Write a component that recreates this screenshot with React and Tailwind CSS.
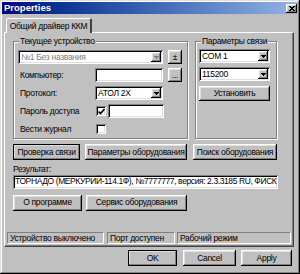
import React from "react";

// win98 style bevels
const raised =
  "bg-[#c0c0c0] shadow-[inset_-1px_-1px_#000,inset_1px_1px_#fff,inset_-2px_-2px_#808080,inset_2px_2px_#dfdfdf]";
const sunken =
  "bg-white shadow-[inset_1px_1px_#808080,inset_-1px_-1px_#fff,inset_2px_2px_#000,inset_-2px_-2px_#dfdfdf]";

const Arrow = ({ disabled }) => (
  <svg width="5" height="3" viewBox="0 0 5 3" shapeRendering="crispEdges">
    <path d="M0 0h5L2.5 3z" fill={disabled ? "#808080" : "#000"} />
  </svg>
);

const Combo = ({ value, width, disabled }) => (
  <div className={`flex h-[14px] p-[2px] ${sunken} ${width}`}>
    <div
      className={`flex-1 flex items-center px-[1px] leading-none whitespace-nowrap overflow-hidden ${
        disabled ? "text-[#808080]" : "text-black"
      }`}
    >
      {value}
    </div>
    <div className={`w-[10px] h-full flex items-center justify-center ${raised}`}>
      <Arrow disabled={disabled} />
    </div>
  </div>
);

const Field = ({ width, children }) => (
  <div
    className={`h-[14px] px-[3px] flex items-center leading-none whitespace-nowrap overflow-hidden ${sunken} ${width}`}
  >
    {children}
  </div>
);

const Button = ({ children, width, height = "h-[16px]", isDefault }) => (
  <div
    className={`${width} ${height} flex items-center justify-center leading-none whitespace-nowrap ${
      isDefault ? "outline outline-1 outline-black -outline-offset-1 " : ""
    }${raised}`}
  >
    {children}
  </div>
);

const CheckBox = ({ checked }) => (
  <div
    className={`w-[10px] h-[10px] flex items-center justify-center ${sunken}`}
  >
    {checked && (
      <svg width="7" height="7" viewBox="0 0 7 7">
        <path d="M0.5 3.5 L2.5 5.5 L6.5 1" stroke="#000" strokeWidth="1.6" fill="none" />
      </svg>
    )}
  </div>
);

const GroupBox = ({ title, width, children, className }) => (
  <div
    className={`relative border border-[#808080] shadow-[inset_1px_1px_#fff,1px_1px_#fff] ${width} ${className}`}
  >
    <span className="absolute top-[-5px] left-[5px] px-[1px] bg-[#c0c0c0] leading-none whitespace-nowrap">
      {title}
    </span>
    {children}
  </div>
);

const StatusCell = ({ width, children }) => (
  <div
    className={`h-[12px] px-[2px] flex items-center leading-none whitespace-nowrap overflow-hidden border-t border-l border-[#808080] border-b-white border-r-white border-b border-r ${width}`}
  >
    {children}
  </div>
);

export default function App() {
  return (
    <div className="w-[300px] h-[274px] bg-[#c0c0c0] text-[8.5px] tracking-[-0.3px] text-black font-['Liberation_Sans',Arial,sans-serif] p-[2px] flex flex-col shadow-[inset_-1px_-1px_#000,inset_1px_1px_#dfdfdf,inset_-2px_-2px_#808080,inset_2px_2px_#fff]">
      {/* Title bar */}
      <div className="h-[12px] flex items-center justify-between pl-[2px] pr-[1px] bg-gradient-to-r from-[#000080] to-[#94b4e4]">
        <span className="text-white font-bold text-[9.5px] tracking-normal leading-none">Properties</span>
        <div className={`w-[11px] h-[9px] flex items-center justify-center ${raised}`}>
          <svg width="6" height="5" viewBox="0 0 6 5" shapeRendering="crispEdges">
            <path d="M0 0h1.5l1.5 1.5L4.5 0H6L3.8 2.5 6 5H4.5L3 3.5 1.5 5H0l2.2-2.5z" fill="#000" />
          </svg>
        </div>
      </div>

      {/* Tabs */}
      <div className="mt-[4px] pl-[4px] flex">
        <div className="relative z-10 w-[86px] h-[15px] -mb-[1px] bg-[#c0c0c0] border-t border-l border-white border-r-2 border-r-[#404040] rounded-t-[2px] flex items-center justify-center leading-none whitespace-nowrap">
          Общий драйвер ККМ
        </div>
      </div>

      {/* Tab panel */}
      <div className="ml-[2px] w-[290px] h-[215px] pl-[2px] pt-[8px] border-t border-l border-white border-r border-b border-r-[#404040] border-b-[#404040] shadow-[inset_-1px_-1px_#808080] flex flex-col">
        <div className="pl-[6px] flex flex-col">
          <div className="flex gap-[7px]">
            <GroupBox title="Текущее устройство" width="w-[175px]" className="h-[98px] pt-[8px] flex flex-col gap-[4px]">
              <div className="flex items-center">
                <Combo value="№1 Без названия" width="ml-[4px] w-[145px]" disabled />
                <Button width="ml-[5px] w-[14px]" height="h-[14px]">±</Button>
              </div>
              <div className="flex items-center">
                <span className="pl-[6px] w-[81px]">Компьютер:</span>
                <Field width="w-[68px]" />
                <Button width="ml-[5px] w-[14px]" height="h-[14px]">...</Button>
              </div>
              <div className="flex items-center">
                <span className="pl-[6px] w-[81px]">Протокол:</span>
                <Combo value="АТОЛ 2Х" width="w-[68px]" />
              </div>
              <div className="flex items-center">
                <span className="pl-[6px] w-[82px]">Пароль доступа</span>
                <CheckBox checked />
                <Field width="ml-[2px] w-[56px]" />
              </div>
              <div className="flex items-center h-[14px]">
                <span className="pl-[6px] w-[82px]">Вести журнал</span>
                <CheckBox />
              </div>
            </GroupBox>

            <GroupBox title="Параметры связи" width="w-[82px]" className="h-[98px] pt-[7px] pl-[3px] flex flex-col">
              <Combo value="COM 1" width="w-[71px]" />
              <Combo value="115200" width="mt-[4px] w-[71px]" />
              <Button width="mt-[5px] w-[71px]" height="h-[15px]">Установить</Button>
            </GroupBox>
          </div>

          <div className="mt-[5px] flex">
            <Button width="w-[67px]" isDefault>Проверка связи</Button>
            <Button width="ml-[5px] w-[102px]">Параметры оборудования</Button>
            <Button width="ml-[6px] w-[84px]">Поиск оборудования</Button>
          </div>

          <div className="mt-[5px] leading-none">Результат:</div>
          <Field width="mt-[1px] w-[265px] tracking-[-0.4px] !px-[2px]">
            ТОРНАДО (МЕРКУРИЙ-114.1Ф), №7777777, версия: 2.3.3185 RU, ФИСК
          </Field>

          <div className="mt-[6px] flex">
            <Button width="w-[69px]">О программе</Button>
            <Button width="ml-[4px] w-[101px]">Сервис оборудования</Button>
          </div>
        </div>

        <div className="mt-auto mb-[2px] flex">
          <StatusCell width="w-[97px]">Устройство выключено</StatusCell>
          <StatusCell width="ml-[3px] w-[68px]">Порт доступен</StatusCell>
          <StatusCell width="ml-[2px] w-[114px]">Рабочий режим</StatusCell>
        </div>
      </div>

      {/* Dialog buttons */}
      <div className="mt-[3px] pr-[6px] flex justify-end">
        <Button width="w-[49px]" isDefault>OK</Button>
        <Button width="ml-[6px] w-[53px]">Cancel</Button>
        <Button width="ml-[5px] w-[51px]">Apply</Button>
      </div>
    </div>
  );
}
